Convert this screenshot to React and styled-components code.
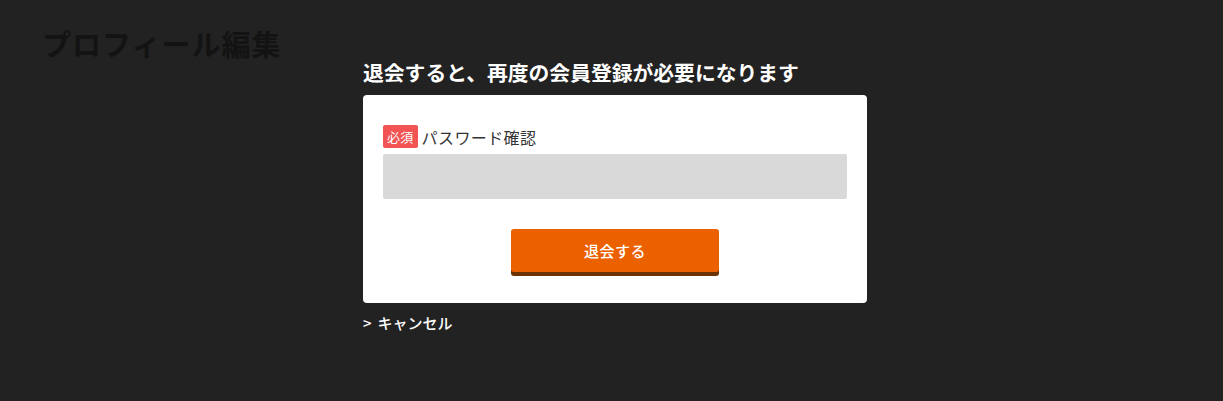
import styled, { createGlobalStyle } from 'styled-components';

const GlobalStyle = createGlobalStyle`
  html, body {
    margin: 0;
    padding: 0;
    background-color: #222222;
  }
  body {
    font-family: 'Noto Sans CJK JP', 'Noto Sans', sans-serif;
    color: #fff;
  }
`;

const Page = styled.div`
  min-height: 401px;
  padding: 32px 0 0 42px;
  box-sizing: border-box;
`;

const PageTitle = styled.h1`
  margin: 0;
  font-family: 'Liberation Serif', 'Noto Sans CJK JP', serif;
  font-size: 29px;
  font-weight: 700;
  line-height: 28px;
  letter-spacing: 1px;
  color: #131313;
`;

const Main = styled.main`
  width: 504px;
  margin-left: 321px;
`;

const Lead = styled.h2`
  margin: -4px 0 0;
  font-size: 20.8px;
  font-weight: 700;
  line-height: 32px;
  color: #fff;
`;

const Card = styled.section`
  margin-top: 7px;
  background-color: #fff;
  border-radius: 4px;
  padding: 30px 20px 27px;
  display: flex;
  flex-direction: column;
`;

const LabelRow = styled.label`
  display: flex;
  align-items: center;
  gap: 4px;
  height: 23px;
  color: #333;
  font-size: 16px;
  letter-spacing: 0.4px;
`;

const Required = styled.span`
  display: inline-flex;
  align-items: center;
  justify-content: center;
  height: 23px;
  padding: 0 4px;
  background-color: #f25353;
  border-radius: 2px;
  color: #fff;
  font-size: 13px;
  letter-spacing: 0.3px;
  line-height: 1;
`;

const Input = styled.input`
  margin-top: 6px;
  height: 45px;
  border: none;
  outline: none;
  border-radius: 2px;
  background-color: #d9d9d9;
  padding: 0 12px;
  font-size: 16px;
`;

const Actions = styled.div`
  display: flex;
  justify-content: center;
  margin-top: 30px;
  padding-bottom: 4px;
`;

const Button = styled.button`
  width: 208px;
  height: 43px;
  border: none;
  border-radius: 3px;
  background-color: #eb6100;
  box-shadow: 0 4px 0 #6b3200;
  color: #fff;
  font-family: inherit;
  font-size: 15px;
  font-weight: 500;
  letter-spacing: 0.5px;
  cursor: pointer;

  &:hover {
    opacity: .9;
  }
`;

const Cancel = styled.a`
  display: inline-flex;
  align-items: center;
  gap: 6px;
  margin-top: 9px;
  color: #fff;
  font-size: 15px;
  font-weight: 500;
  text-decoration: none;
  line-height: 22px;
`;

export default function App() {
  return (
    <>
      <GlobalStyle />
      <Page>
        <PageTitle>プロフィール編集</PageTitle>
        <Main>
          <Lead>退会すると、再度の会員登録が必要になります</Lead>
          <Card>
            <LabelRow htmlFor="password">
              <Required>必須</Required>
              パスワード確認
            </LabelRow>
            <Input id="password" type="password" />
            <Actions>
              <Button type="button">退会する</Button>
            </Actions>
          </Card>
          <Cancel href="#">
            <span>&gt;</span>キャンセル
          </Cancel>
        </Main>
      </Page>
    </>
  );
}
